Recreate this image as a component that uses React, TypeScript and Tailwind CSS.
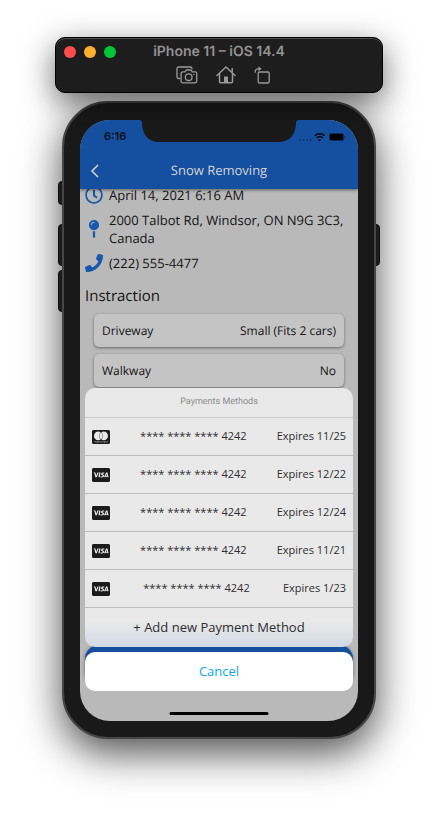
import React from "react";
import { FaCcMastercard, FaCcVisa, FaMapPin, FaPhone, FaRegClock } from "react-icons/fa";

type Card = { brand: "mastercard" | "visa"; last4: string; expires: string };

const cards: Card[] = [
  { brand: "mastercard", last4: "4242", expires: "11/25" },
  { brand: "visa", last4: "4242", expires: "12/22" },
  { brand: "visa", last4: "4242", expires: "12/24" },
  { brand: "visa", last4: "4242", expires: "11/21" },
  { brand: "visa", last4: "4242", expires: "1/23" },
];

const options = [
  { label: "Driveway", value: "Small (Fits 2 cars)" },
  { label: "Walkway", value: "No" },
];

function ScreenshotIcon() {
  return (
    <svg width="22" height="18" viewBox="0 0 22 18" fill="none" stroke="#9a9a9a" strokeWidth="1.3" strokeLinejoin="round">
      <path d="M4 12.500H2.800A1.800 1.800 0 0 1 1 10.700V2.800A1.800 1.800 0 0 1 2.800 1h11.400A1.800 1.800 0 0 1 16 2.800V3.200" />
      <path d="M6.800 5.800H9l1.200-1.800h4.800l1.200 1.800h3A1.500 1.500 0 0 1 20.700 7.300v7.900a1.700 1.700 0 0 1-1.700 1.700H6.800a1.700 1.700 0 0 1-1.700-1.700V7.500a1.700 1.700 0 0 1 1.700-1.700z" />
      <circle cx="12.700" cy="11.200" r="3.300" />
      <circle cx="17.800" cy="8.400" r="0.700" fill="#9a9a9a" stroke="none" />
    </svg>
  );
}

function HomeIcon() {
  return (
    <svg width="20" height="18" viewBox="0 0 20 18" fill="none" stroke="#9a9a9a" strokeWidth="1.5" strokeLinecap="round" strokeLinejoin="round">
      <path d="M1 9.500L10 1l9 8.500" />
      <path d="M3.500 8v7.500A1.300 1.300 0 0 0 4.800 16.800h10.400a1.300 1.300 0 0 0 1.300-1.300V8" />
      <path d="M16.200 6V2.500" />
      <path d="M8 16.500v-6h4v6z" fill="#9a9a9a" stroke="none" />
    </svg>
  );
}

function RotateIcon() {
  return (
    <svg width="17" height="18" viewBox="0 0 17 18" fill="none" stroke="#9a9a9a" strokeWidth="1.300" strokeLinejoin="round">
      <rect x="4.200" y="6" width="11" height="11" rx="1.300" />
      <path d="M1.200 6.200V5.600A2.800 2.800 0 0 1 4 2.800H5" strokeLinecap="round" />
      <path d="M4.500 0.300L7.600 2.800L4.500 5.300z" fill="#9a9a9a" stroke="none" />
    </svg>
  );
}

function SimulatorBar() {
  return (
    <header className="relative z-10 flex h-14 flex-col rounded-[10px] border border-black bg-[#1d1d1d] shadow-[inset_0_1px_0_#4a4a4a,0_10px_32px_rgba(0,0,0,0.6)]">
      <div className="grid h-7 grid-cols-[1fr_auto_1fr] items-center px-2">
        <div className="flex gap-2">
          <span className="size-3 rounded-full bg-[#ff4d4d]" />
          <span className="size-3 rounded-full bg-[#ffb02c]" />
          <span className="size-3 rounded-full bg-[#00c837]" />
        </div>
        <h1 className="font-[Inter,sans-serif] text-sm font-semibold text-[#929292]">iPhone 11 – iOS 14.4</h1>
      </div>
      <div className="flex items-start justify-center gap-[18px] pl-2">
        <button type="button" aria-label="Screenshot"><ScreenshotIcon /></button>
        <button type="button" aria-label="Home"><HomeIcon /></button>
        <button type="button" aria-label="Rotate"><RotateIcon /></button>
      </div>
    </header>
  );
}

function StatusBar() {
  return (
    <div className="flex h-[33px] items-center justify-between pr-3 pl-6 text-[#0a0d14]">
      <span className="font-[Inter,sans-serif] text-[11px] font-semibold">6:16</span>
      <svg width="48" height="12" viewBox="0 0 48 12" fill="none">
        <g fill="#0e3a78">
          <rect x="1" y="8" width="2" height="2" />
          <rect x="4.500" y="8" width="2" height="2" />
          <rect x="8" y="8" width="2" height="2" />
          <rect x="11.500" y="8" width="2" height="2" />
        </g>
        <g stroke="#05080f" strokeWidth="1.600">
          <path d="M16.800 4.700a7 7 0 0 1 9.800 0" />
          <path d="M18.800 6.900a4.200 4.200 0 0 1 5.800 0" />
        </g>
        <path d="M20.200 8.600a2.200 2.200 0 0 1 3 0l-1.500 1.700z" fill="#05080f" />
        <rect x="31" y="2" width="15" height="8" rx="2" fill="#0b2d60" />
        <rect x="32" y="3" width="13" height="6" rx="1" fill="#000" />
        <rect x="46.500" y="5" width="1" height="2.500" rx="0.500" fill="#0b2d60" />
      </svg>
    </div>
  );
}

function Notch() {
  return (
    <svg
      className="absolute top-0 left-1/2 z-20 -translate-x-1/2"
      width="160"
      height="22"
      viewBox="0 0 160 22"
      fill="#191919"
    >
      <path d="M0 0C2.500 0 3 1.500 3 4C3.500 15 10 22 20 22H140C150 22 156.500 15 157 4C157 1.500 157.500 0 160 0Z" />
    </svg>
  );
}

function JobDetails() {
  return (
    <section className="-mt-[3px] flex flex-col px-[5px] text-[13px] leading-[18px] text-[#141414]">
      <ul className="flex flex-col gap-[7px]">
        <li className="flex items-center gap-[6px]">
          <FaRegClock className="size-[18px] text-[#1757ad]" />
          April 14, 2021 6:16 AM
        </li>
        <li className="flex items-center gap-[6px]">
          <FaMapPin className="size-[18px] shrink-0 text-[#1757ad]" />
          <span className="whitespace-nowrap">
            2000 Talbot Rd, Windsor, ON N9G 3C3,
            <br />
            Canada
          </span>
        </li>
        <li className="flex items-center gap-[6px]">
          <FaPhone className="size-[18px] text-[#1757ad]" />
          (222) 555-4477
        </li>
      </ul>
      <h3 className="mt-[14px] text-[15px] leading-5">Instraction</h3>
      <dl className="mt-2 flex flex-col gap-[7px] px-[9px] text-xs">
        {options.map((o) => (
          <div
            key={o.label}
            className="flex h-[33px] items-center justify-between rounded-[5px] bg-[#c4c4c4] px-2 shadow-[0_1px_3px_rgba(0,0,0,0.45)]"
          >
            <dt>{o.label}</dt>
            <dd>{o.value}</dd>
          </div>
        ))}
      </dl>
    </section>
  );
}

function PaymentSheet() {
  return (
    <div className="absolute inset-x-[5px] bottom-[30px] flex flex-col gap-[5px]">
      <div className="overflow-hidden rounded-[10px] bg-linear-to-b from-[#e9e9e9] from-90% to-[#d3dae6]">
        <h3 className="flex h-[30px] items-center justify-center border-b border-[#cbcbcb] font-[Roboto,sans-serif] text-[9px] text-[#8c8c8c]">
          Payments Methods
        </h3>
        {cards.map((c, i) => (
          <button
            key={i}
            type="button"
            className="flex h-[38px] w-full items-center justify-between border-b border-[#bdbdbd] px-[7px] text-[11px] text-[#2e2e2e]"
          >
            {c.brand === "visa" ? (
              <FaCcVisa className="size-[18px] text-[#1b1b1b]" />
            ) : (
              <FaCcMastercard className="size-[18px] text-[#1b1b1b]" />
            )}
            <span>**** **** **** {c.last4}</span>
            <span>Expires {c.expires}</span>
          </button>
        ))}
        <button type="button" className="h-[39px] w-full text-[13px] text-[#2e2e2e]">
          + Add new Payment Method
        </button>
      </div>
      <button type="button" className="h-[39px] rounded-[10px] bg-white text-[13px] text-[#0aa5ee]">
        Cancel
      </button>
    </div>
  );
}

export default function App() {
  return (
    <main className="mx-auto w-full max-w-[328px] pt-[37px] pb-[74px] [text-rendering:geometricPrecision]">
      <SimulatorBar />
      <div className="relative mx-[7px] mt-2">
        <span className="absolute top-20 -left-1 h-6 w-2 rounded-l-sm border border-[#151515] bg-[#2c2c2c]" />
        <span className="absolute top-[123px] -left-1 h-[42px] w-2 rounded-l-sm border border-[#151515] bg-[#2c2c2c]" />
        <span className="absolute top-[169px] -left-1 h-[42px] w-2 rounded-l-sm border border-[#151515] bg-[#2c2c2c]" />
        <span className="absolute top-[123px] -right-1 h-[42px] w-2 rounded-r-sm border border-[#151515] bg-[#2c2c2c]" />
        <div className="relative rounded-[46px] border-2 border-[#464646] bg-[#191919] px-4 pt-[17px] pb-4 shadow-[0_14px_40px_rgba(0,0,0,0.7)]">
          <div className="relative flex aspect-[278/601] flex-col overflow-hidden rounded-[30px] bg-[#b9b9b9] font-['Open_Sans',sans-serif]">
            <div className="z-10 bg-[#154f9f] shadow-[0_1px_3px_rgba(0,0,0,0.5)]">
              <StatusBar />
              <div className="grid h-9 grid-cols-[1fr_auto_1fr] items-center px-[10px] text-[#d3d3d3]">
                <button type="button" aria-label="Back">
                  <svg width="10" height="14" viewBox="0 0 10 14" fill="none" stroke="currentColor" strokeWidth="1.600">
                    <path d="M8 1L2 7L8 13" />
                  </svg>
                </button>
                <h2 className="text-[13px]">Snow Removing</h2>
              </div>
            </div>
            <Notch />
            <JobDetails />
            <div className="mx-[5px] mt-auto mb-9 h-10 rounded-[14px] bg-[#154f9f] shadow-[0_1px_4px_rgba(0,0,0,0.4)]" />
            <PaymentSheet />
            <div className="absolute bottom-[6px] left-1/2 h-[3px] w-[99px] -translate-x-1/2 rounded-full bg-black" />
          </div>
        </div>
      </div>
    </main>
  );
}
